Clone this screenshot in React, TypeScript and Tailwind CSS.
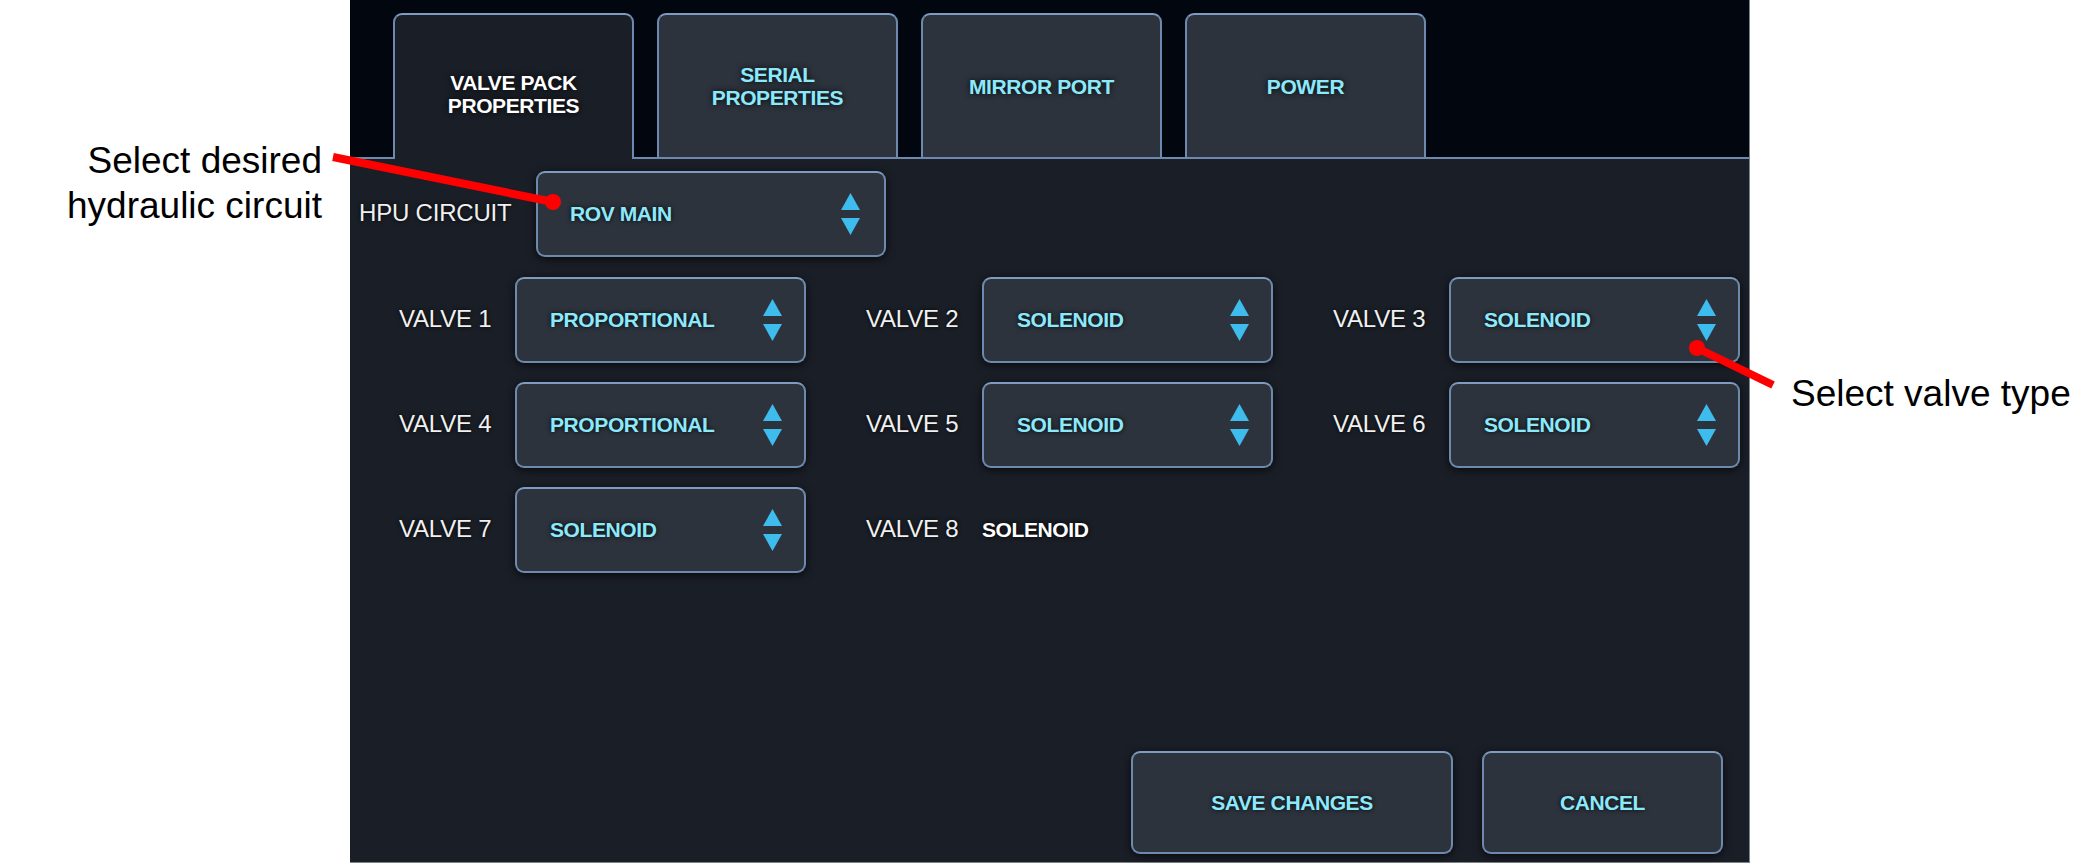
import React from "react";

const font = "font-['Liberation_Sans',Arial,sans-serif]";

function Arrows() {
  return (
    <svg width="19" height="42" viewBox="0 0 19 42" className="shrink-0">
      <polygon points="0,17 9.5,0 19,17" fill="#3fbcee" />
      <polygon points="0,25 19,25 9.5,42" fill="#3fbcee" />
    </svg>
  );
}

function Dropdown({ value, wide }: { value: string; wide?: boolean }) {
  return (
    <div
      className={
        (wide ? "w-[350px] pl-[32px] pr-[24px]" : "w-[291px] pl-[33px] pr-[22px]") +
        " h-[86px] shrink-0 rounded-[9px] border-2 border-[#6d89ad] border-t-[#7e9cc2] bg-[#2d333d] flex items-center shadow-[0_2px_8px_rgba(0,0,0,0.7)]"
      }
    >
      <span className="flex-1 font-bold text-[21px] leading-none text-[#8ce9fb] tracking-[-0.4px] -mt-[2px] [text-shadow:0_0_5px_rgba(0,0,0,0.95)]">
        {value}
      </span>
      <Arrows />
    </div>
  );
}

function Tab({ lines, active }: { lines: string[]; active?: boolean }) {
  return (
    <div
      className={
        "w-[241px] shrink-0 rounded-t-[9px] border-2 border-[#6d89ad] border-t-[#7e9cc2] flex flex-col items-center justify-center font-bold text-[21px] leading-[23px] tracking-[-0.4px] [text-shadow:0_0_6px_rgba(0,0,0,0.95)] " +
        (active
          ? "h-[146px] border-b-0 bg-[#1a1e26] text-white pt-[14px] relative z-10"
          : "h-[144px] border-b-0 bg-[#2d333d] text-[#8ce9fb]")
      }
    >
      {lines.map((l) => (
        <span key={l}>{l}</span>
      ))}
    </div>
  );
}

function Label({ text, w }: { text: string; w: string }) {
  return (
    <span
      className={
        w +
        " shrink-0 text-[24px] leading-none text-[#f0f0f0] tracking-[-0.2px] -mt-[2px] [text-shadow:0_0_4px_rgba(0,0,0,0.9)]"
      }
    >
      {text}
    </span>
  );
}

function ValveCell({ n, value, plain }: { n: number; value: string; plain?: boolean }) {
  return (
    <div className="flex items-center h-[86px]">
      <Label text={`VALVE ${n}`} w="w-[116px]" />
      {plain ? (
        <span className="font-bold text-[21px] leading-none text-white tracking-[-0.4px] -mt-[2px] [text-shadow:0_0_5px_rgba(0,0,0,0.95)]">
          {value}
        </span>
      ) : (
        <Dropdown value={value} />
      )}
    </div>
  );
}

function Button({ text, w }: { text: string; w: string }) {
  return (
    <div
      className={
        w +
        " h-[103px] rounded-[9px] border-2 border-[#6d89ad] border-t-[#7e9cc2] bg-[#2d333d] flex items-center justify-center font-bold text-[21px] leading-none text-[#8ce9fb] tracking-[-0.4px] [text-shadow:0_0_5px_rgba(0,0,0,0.95)] shadow-[0_2px_8px_rgba(0,0,0,0.7)]"
      }
    >
      {text}
    </div>
  );
}

export default function App() {
  return (
    <div className={font + " relative w-[2100px] h-[863px] bg-white flex overflow-hidden"}>
      {/* left annotation */}
      <div className="w-[350px] shrink-0 pt-[138px] pr-[28px] text-right text-black text-[37px] leading-[45px]">
        <div>Select desired</div>
        <div>hydraulic circuit</div>
      </div>

      {/* panel */}
      <div className="w-[1400px] shrink-0 h-full flex flex-col bg-[#181c24] border-r border-b border-[#7d838b]">
        {/* tab bar */}
        <div className="h-[159px] shrink-0 bg-[#02060f] border-b-2 border-[#6d89ad] flex items-start gap-[23px] pl-[43px] pt-[13px]">
          <Tab lines={["VALVE PACK", "PROPERTIES"]} active />
          <Tab lines={["SERIAL", "PROPERTIES"]} />
          <Tab lines={["MIRROR PORT"]} />
          <Tab lines={["POWER"]} />
        </div>

        {/* content */}
        <div className="flex-1 flex flex-col bg-[#1a1e26]">
          <div className="flex items-center mt-[12px] pl-[9px]">
            <Label text="HPU CIRCUIT" w="w-[177px]" />
            <Dropdown value="ROV MAIN" wide />
          </div>

          <div className="grid grid-cols-[467px_467px_467px] gap-y-[19px] mt-[20px] pl-[49px]">
            <ValveCell n={1} value="PROPORTIONAL" />
            <ValveCell n={2} value="SOLENOID" />
            <ValveCell n={3} value="SOLENOID" />
            <ValveCell n={4} value="PROPORTIONAL" />
            <ValveCell n={5} value="SOLENOID" />
            <ValveCell n={6} value="SOLENOID" />
            <ValveCell n={7} value="SOLENOID" />
            <ValveCell n={8} value="SOLENOID" plain />
          </div>

          <div className="mt-auto flex justify-end gap-[29px] pr-[26px] pb-[8px]">
            <Button text="SAVE CHANGES" w="w-[322px]" />
            <Button text="CANCEL" w="w-[241px]" />
          </div>
        </div>
      </div>

      {/* right annotation */}
      <div className="flex-1 pt-[371px] pl-[41px] text-black text-[37px] leading-[45px] whitespace-nowrap">
        Select valve type
      </div>

      {/* red callout lines */}
      <svg
        className="absolute inset-0 pointer-events-none"
        width="2100"
        height="863"
        viewBox="0 0 2100 863"
      >
        <line x1="333" y1="157" x2="553" y2="202" stroke="#ff0000" strokeWidth="8" />
        <circle cx="553" cy="202" r="8" fill="#ff0000" />
        <line x1="1697" y1="348" x2="1773" y2="385" stroke="#ff0000" strokeWidth="8" />
        <circle cx="1697" cy="348" r="8" fill="#ff0000" />
      </svg>
    </div>
  );
}
